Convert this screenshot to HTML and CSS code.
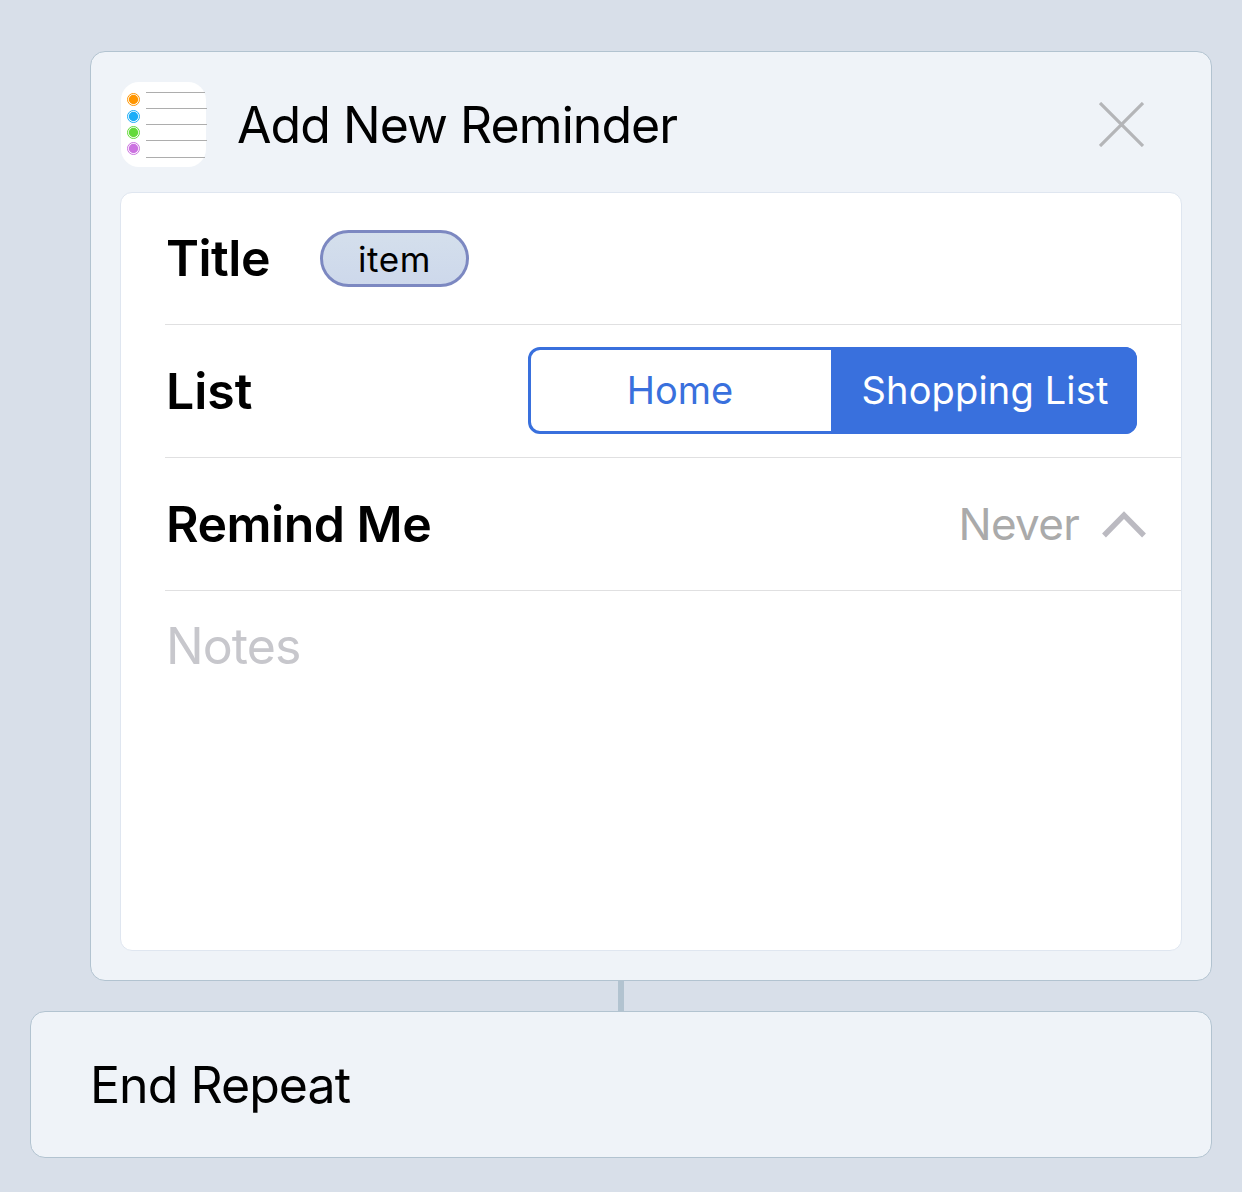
FILE: index.html
```
<!DOCTYPE html>
<html lang="en">
<head>
    <meta charset="UTF-8">
    <meta name="viewport" content="width=device-width, initial-scale=1.0">
    <title>Add New Reminder</title>
    <link rel="stylesheet" href="styles.css">
</head>
<body>
    <main class="workflow">
        <section class="card action-card">
            <header class="card-header">
                <svg class="app-icon" width="88" height="86" viewBox="0 0 88 86">
                    <rect x="1" y="1" width="85" height="85" rx="18" fill="#fff" />
                    <g stroke="#adadad" stroke-width="1">
                        <path d="M26 11.5h59M26 27.5h61M26 43.5h61M26 59.5h61M26 76.5h59" />
                    </g>
                    <g fill="#ff9500" stroke="#ff9500"><circle cx="13.5" cy="18.5" r="4.7" stroke="none" /><circle cx="13.5" cy="18.5" r="6" fill="none" /></g>
                    <g fill="#1badf8" stroke="#1badf8"><circle cx="13.5" cy="35.5" r="4.7" stroke="none" /><circle cx="13.5" cy="35.5" r="6" fill="none" /></g>
                    <g fill="#63da38" stroke="#63da38"><circle cx="13.5" cy="51.5" r="4.7" stroke="none" /><circle cx="13.5" cy="51.5" r="6" fill="none" /></g>
                    <g fill="#cc73e1" stroke="#cc73e1"><circle cx="13.5" cy="67.5" r="4.7" stroke="none" /><circle cx="13.5" cy="67.5" r="6" fill="none" /></g>
                </svg>
                <h1 class="card-title">Add New Reminder</h1>
                <button class="close-btn" aria-label="Close">
                    <svg width="45" height="45" viewBox="0 0 45 45">
                        <path d="M1 1l43 43M44 1l-43 43" stroke="#b4b5b8" stroke-width="3.2" />
                    </svg>
                </button>
            </header>
            <div class="panel">
                <div class="row row-title">
                    <span class="label label-title">Title</span>
                    <span class="token">item</span>
                </div>
                <div class="row">
                    <span class="label label-list">List</span>
                    <div class="segmented">
                        <button class="segment">Home</button>
                        <button class="segment active">Shopping List</button>
                    </div>
                </div>
                <div class="row">
                    <span class="label">Remind Me</span>
                    <span class="value">Never</span>
                    <svg class="chevron" width="44" height="28" viewBox="0 0 44 28">
                        <path d="M2 24.5L22 4L42 24.5" fill="none" stroke="#bbbac1" stroke-width="5.4" />
                    </svg>
                </div>
                <div class="notes">Notes</div>
            </div>
        </section>
        <div class="connector"></div>
        <section class="card end-card">
            <h2 class="card-title end-title">End Repeat</h2>
        </section>
    </main>
</body>
</html>
```
FILE: styles.css
```
:root {
    --background: #d8dfe9;
    --surface: #eff3f8;
    --border: #b2c3d0;
    --primary: #3970dd;
    --divider: #e0e0e1;
}

* {
    margin: 0;
    padding: 0;
    box-sizing: border-box;
}

body {
    font-family: Inter, "Liberation Sans", sans-serif;
    background: var(--background);
    color: #000;
    min-height: 100vh;
}

button {
    font: inherit;
    border: none;
    background: none;
}

.workflow {
    display: flex;
    flex-direction: column;
    padding: 51px 30px 34px;
}

.card {
    background: var(--surface);
    border: 1px solid var(--border);
    border-radius: 15px;
}

.action-card {
    height: 930px;
    margin-left: 60px;
    padding: 0 29px 29px;
    display: flex;
    flex-direction: column;
}

.card-header {
    height: 140px;
    flex-shrink: 0;
    display: flex;
    align-items: center;
    padding: 4px 38px 0 0;
}

.app-icon {
    margin-right: 29px;
}

.card-title {
    padding-top: 2px;
    font-size: 50px;
    font-weight: 400;
    line-height: 61px;
    letter-spacing: -0.95px;
    white-space: nowrap;
}

.close-btn {
    margin: 1px 0 0 auto;
}

.close-btn svg {
    display: block;
}

.panel {
    flex: 1;
    background: #fff;
    border: 1px solid #dfe6f0;
    border-radius: 12px;
    padding-left: 44px;
}

.row {
    height: 133px;
    display: flex;
    align-items: center;
    padding: 0 44px 1px 0;
    border-bottom: 1px solid var(--divider);
}

.row-title {
    height: 132px;
    padding-bottom: 0;
}

.label {
    padding: 2px 0 0 1px;
    font-size: 50px;
    font-weight: 600;
    line-height: 61px;
    letter-spacing: -0.5px;
    white-space: nowrap;
}

.label-title {
    width: 155px;
    margin-bottom: 1px;
    padding-top: 0;
}

.label-list {
    letter-spacing: 0;
}

.token {
    width: 149px;
    height: 57px;
    border: 3px solid #7c88c1;
    border-radius: 29px;
    background: linear-gradient(#d4dfec, #cdd8eb);
    font-size: 35px;
    line-height: 52px;
    letter-spacing: 0.6px;
    text-align: center;
}

.segmented {
    display: flex;
    width: 609px;
    height: 87px;
    margin-left: auto;
    border: 3px solid var(--primary);
    border-radius: 12px;
}

.segment {
    width: 300px;
    padding: 0 2px 2px 0;
    font-size: 38px;
    color: var(--primary);
    white-space: nowrap;
}

.segment.active {
    flex: 1;
    margin: -3px -3px -3px 0;
    padding: 0 0 2px 2px;
    border-radius: 0 12px 12px 0;
    background: var(--primary);
    color: #fff;
    letter-spacing: 0.15px;
}

.value {
    margin-left: auto;
    font-size: 44px;
    letter-spacing: -0.7px;
    color: #aaa;
}

.chevron {
    margin: 2px -9px 0 23px;
}

.notes {
    padding: 25px 0 0 1px;
    font-size: 50px;
    line-height: 60px;
    letter-spacing: -0.9px;
    color: #c7c7cc;
}

.connector {
    width: 6px;
    height: 30px;
    margin-left: 588px;
    background: var(--border);
}

.end-card {
    height: 147px;
    display: flex;
    align-items: center;
    padding-left: 59px;
}
```
